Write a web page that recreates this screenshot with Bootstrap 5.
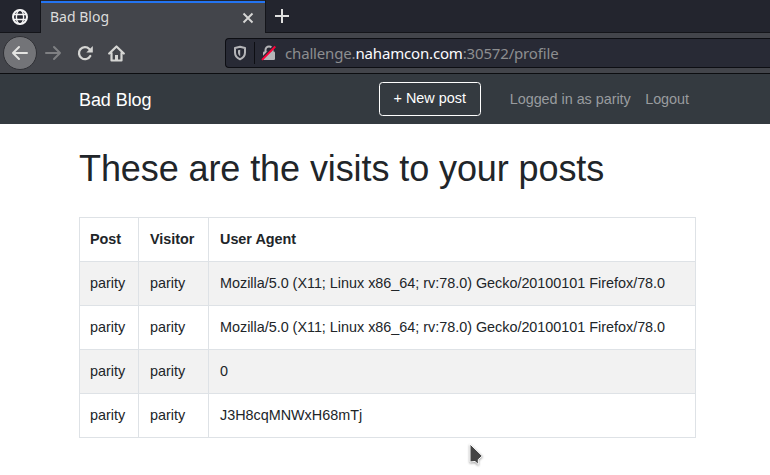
<!DOCTYPE html>
<html lang="en">
<head>
<meta charset="utf-8">
<meta name="viewport" content="width=device-width, initial-scale=1">
<title>Bad Blog</title>
<link rel="stylesheet" href="https://cdn.jsdelivr.net/npm/bootstrap@5.3.0/dist/css/bootstrap.min.css">
<style>
html{font-size:14.4px}
body{font-family:"Liberation Sans",sans-serif;font-size:14.4px;color:#212529;width:770px;height:475px}
svg{display:block;flex:none}
.chrome{font-family:"Noto Sans",sans-serif;background:#43454b}
.tabs{height:33px;background:#23252e}
.pinned{width:41px;border-right:1px solid #14151a;border-bottom:1px solid #14151a;padding-top:1px}
.tab-active{width:224px;margin-top:1px;border-top:2px solid #2374f2;background:#43454b;color:#dcdcdb;padding:0 10px 0 9px;font-size:14px}
.tab-active span{margin-top:-3px}
.tab-rest{border-left:1px solid #14151a;border-bottom:1px solid #14151a;padding-left:9px}
.tools{height:41px;border-bottom:1px solid #0c0d10;padding-left:3px}
.back{width:34px;height:34px;background:#737478;border:1px solid #2f3035}
.forward{margin-left:7px}
.reload{margin-left:15px}
.home{margin-left:14px}
.url{margin-left:100px;height:30px;background:#282a35;border:1px solid #0d0e13;border-right:0;border-radius:4px 0 0 4px;color:#8d8e90;font-size:15px;padding-left:6px}
.url-text{margin-left:8px;letter-spacing:-.165px}
.url b{font-weight:400;color:#fbfbfe}
.divide{width:1px;height:22px;background:#0d0e13;margin:0 6px 0 6px}
.site-nav{height:50px;background:#343a40;padding-left:79px;padding-right:81px}
.site-nav .navbar-brand{font-size:18px;color:#fff;margin:2px 0 0;letter-spacing:-.08px}
.new-post{font-size:14.4px;width:102px;height:34px;border-color:#fff;border-radius:3.6px;padding:0;margin-right:29px;margin-top:-1px}
.muted-link{color:#999c9f;margin-top:1px;letter-spacing:-.03px}
.page{padding:23px 74px 0 79px}
.page h1{font-size:36px;font-weight:400;line-height:43px;margin:0 0 27px;letter-spacing:-.09px}
.visits{width:617px;table-layout:fixed;border-color:#dee2e6;margin:0;border-collapse:collapse;color:#212529}
.visits th,.visits td{height:44px;padding:0 11px;vertical-align:middle;white-space:nowrap;line-height:21px;letter-spacing:-.015px}
.visits th:first-child,.visits td:first-child{padding-left:10px}
.visits tbody tr:nth-child(odd)>td{background:#f2f2f2;box-shadow:none}
.pointer{left:467px;top:440px}
</style>
<script src="https://cdn.jsdelivr.net/npm/bootstrap@5.3.0/dist/js/bootstrap.bundle.min.js"></script>
</head>
<body class="m-0 bg-white overflow-hidden position-relative">
<header class="chrome">
  <div class="tabs d-flex">
    <div class="pinned d-flex align-items-center justify-content-center">
      <svg width="18" height="18" viewBox="0 0 18 18" fill="none" stroke="#f4f4f4"><circle cx="9" cy="9" r="7" stroke-width="2"/><ellipse cx="9" cy="9" rx="3.6" ry="7" stroke-width="1.4"/><path d="M2.5 6.5h13M2.5 11.5h13" stroke-width="1.3"/></svg>
    </div>
    <div class="tab-active d-flex align-items-center justify-content-between">
      <span>Bad Blog</span>
      <svg width="14" height="14" viewBox="0 0 14 14" stroke="#d6d6d5" stroke-width="1.9"><path d="M2.500 2.500l9 9M11.500 2.500l-9 9"/></svg>
    </div>
    <div class="tab-rest d-flex align-items-center flex-grow-1">
      <svg width="14" height="14" viewBox="0 0 14 14" stroke="#e0e0df" stroke-width="2"><path d="M7 0v14M0 7h14"/></svg>
    </div>
  </div>
  <div class="tools d-flex align-items-center">
    <div class="back rounded-circle d-flex align-items-center justify-content-center">
      <svg width="18" height="16" viewBox="0 0 18 16" fill="none" stroke="#e4e4e2" stroke-width="2" stroke-linecap="round" stroke-linejoin="round"><path d="M16 8H2M8 2L2 8l6 6"/></svg>
    </div>
    <svg class="forward" width="18" height="16" viewBox="0 0 18 16" fill="none" stroke="#7f8083" stroke-width="2" stroke-linecap="round" stroke-linejoin="round"><path d="M2 8h14M10 2l6 6-6 6"/></svg>
    <svg class="reload" width="17" height="16" viewBox="0 0 17 16" fill="none" stroke="#d5d5d3" stroke-width="2.300" stroke-linecap="round"><path d="M13.300 11A6 6 0 1 1 12.300 4"/><path d="M15.800 1v6.500h-6.500z" fill="#d5d5d3" stroke="none"/></svg>
    <svg class="home" width="17" height="17" viewBox="0 0 17 17" fill="none" stroke="#d5d5d3" stroke-width="2.200" stroke-linecap="round" stroke-linejoin="round"><path d="M1.200 8.500l7.300-7 7.300 7M3.500 8v7.500h10V8"/><path d="M8.500 15v-5" stroke-width="3" stroke-linecap="butt"/></svg>
    <div class="url d-flex align-items-center flex-grow-1">
      <svg width="16" height="16" viewBox="0 0 16 16" fill="none" stroke="#b5b5b8" stroke-width="2" stroke-linejoin="round"><path d="M8 1.800L13 3v4.500c0 3-2 5.500-5 6.700-3-1.200-5-3.700-5-6.700V3z"/><path d="M8.200 4.800v6.400c-1.500-1-2.200-2.200-2.200-4V5.300z" fill="#b5b5b8" stroke="none"/></svg>
      <span class="divide"></span>
      <svg width="16" height="16" viewBox="0 0 16 16"><path d="M4.500 7V5a3.500 3.500 0 0 1 7 0v2" fill="none" stroke="#b5b5b8" stroke-width="2"/><rect x="2" y="6.500" width="12" height="8.500" rx="1.200" fill="#b5b5b8"/><path d="M.7 13.500L13.400 .8" stroke="#282a35" stroke-width="2"/><path d="M1 14.800L14.300 1.500" stroke="#ff0039" stroke-width="1.900"/></svg>
      <span class="url-text text-nowrap">challenge.<b>nahamcon.com</b>:30572/profile</span>
    </div>
  </div>
</header>
<nav class="site-nav navbar d-flex flex-nowrap py-0">
  <a class="navbar-brand py-0">Bad Blog</a>
  <div class="d-flex align-items-center text-nowrap">
    <a class="new-post btn btn-outline-light text-white d-flex align-items-center justify-content-center">+ New post</a>
    <span class="muted-link">Logged in as parity</span>
    <span class="muted-link ms-3">Logout</span>
  </div>
</nav>
<main class="page">
  <h1>These are the visits to your posts</h1>
  <table class="visits table table-bordered">
    <colgroup><col style="width:59px"><col style="width:70px"><col></colgroup>
    <thead><tr><th>Post</th><th>Visitor</th><th>User Agent</th></tr></thead>
    <tbody>
      <tr><td>parity</td><td>parity</td><td>Mozilla/5.0 (X11; Linux x86_64; rv:78.0) Gecko/20100101 Firefox/78.0</td></tr>
      <tr><td>parity</td><td>parity</td><td>Mozilla/5.0 (X11; Linux x86_64; rv:78.0) Gecko/20100101 Firefox/78.0</td></tr>
      <tr><td>parity</td><td>parity</td><td>0</td></tr>
      <tr><td>parity</td><td>parity</td><td>J3H8cqMNWxH68mTj</td></tr>
    </tbody>
  </table>
</main>
<svg class="pointer position-absolute" width="20" height="28" viewBox="0 0 20 28"><path d="M3 4v18l5-.5 3.300 3v-5l4-3.500z" fill="#444" stroke="#fff" stroke-width="1" style="filter:drop-shadow(0 1px 1px #0006)"/></svg>
</body>
</html>
